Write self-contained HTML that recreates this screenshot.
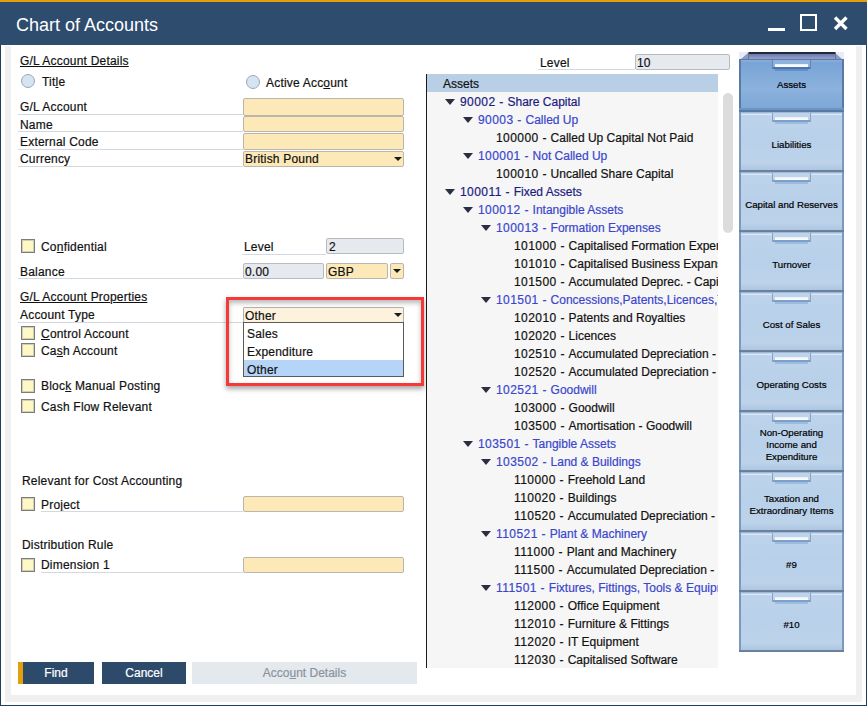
<!DOCTYPE html><html><head><meta charset="utf-8"><style>
*{margin:0;padding:0;box-sizing:border-box}
html,body{width:867px;height:706px;overflow:hidden;background:#fff;font-family:"Liberation Sans",sans-serif;-webkit-text-stroke:0.2px}
.a{position:absolute}
.t{position:absolute;font-size:12px;line-height:14px;color:#111;white-space:nowrap;letter-spacing:.2px}
.u{text-decoration:underline}
.ln{position:absolute;height:1px;background:#d3d9e0}
.fld{position:absolute;background:#fde9b8;border:1px solid #b9b6ad;border-radius:2px}
.fg{position:absolute;background:#e6eaee;border:1px solid #b8bcc1;border-radius:2px}
.cb{position:absolute;width:14px;height:14px;background:#fdf8c6;border:1px solid #7c7c7c;box-shadow:inset 0 0 0 1px rgba(130,130,130,.35)}
.rd{position:absolute;width:14px;height:14px;border-radius:50%;background:#d6e3f1;border:1px solid #9aa8b8}
.arr{position:absolute;width:0;height:0;border-left:4px solid transparent;border-right:4px solid transparent;border-top:4px solid #1a1a1a}
.tri{position:absolute;width:0;height:0;border-left:5px solid transparent;border-right:5px solid transparent;border-top:6px solid #2b2e42}
.tr{position:absolute;font-size:12px;line-height:14px;white-space:nowrap}
.np{letter-spacing:.43px}
.l1{color:#1c1c82}
.l2{color:#3a46cc}
.lf{color:#111}
.dr{position:absolute;left:739px;width:105px;height:60px}
.dt{position:absolute;width:105px;text-align:center;font-size:9.7px;line-height:12px;color:#000}
.btn{position:absolute;top:662px;height:22px;background:#2d4a6b;color:#fff;font-size:12px;line-height:22px;text-align:center}
</style></head><body>
<div class="a" style="left:0;top:0;width:867px;height:2px;background:#e4a00c"></div>
<div class="a" style="left:0;top:2px;width:867px;height:43px;background:#2e4c6d"></div>
<div class="a" style="left:16px;top:13.5px;font-size:18px;line-height:22px;color:#fff;white-space:nowrap;-webkit-text-stroke:0">Chart of Accounts</div>
<div class="a" style="left:768px;top:28px;width:17px;height:3px;background:#fff"></div>
<div class="a" style="left:800px;top:14px;width:17px;height:17px;border:2px solid #fff"></div>
<svg class="a" style="left:832px;top:14px" width="17" height="17" viewBox="0 0 17 17"><path d="M3 3.5 L14.5 15 M14.5 3.5 L3 15" stroke="#fff" stroke-width="3.4"/></svg>
<div class="a" style="left:0;top:45px;width:1px;height:661px;background:#1f3f5f"></div>
<div class="a" style="left:866px;top:45px;width:1px;height:661px;background:#1f3f5f"></div>
<div class="a" style="left:0;top:705px;width:867px;height:1px;background:#1f3f5f"></div>
<div class="a" style="left:5px;top:46px;width:6px;height:656px;background:#f0f0f0"></div>
<div class="a" style="left:856px;top:46px;width:6px;height:656px;background:#f0f0f0"></div>
<div class="a" style="left:5px;top:695px;width:857px;height:7px;background:#f0f0f0"></div>
<div class="t u" style="left:20px;top:54.0px;">G/L Account Details</div>
<div class="rd" style="left:21px;top:74px"></div>
<div class="t" style="left:42px;top:75.0px;">Tit<u>l</u>e</div>
<div class="rd" style="left:246px;top:75px"></div>
<div class="t" style="left:266px;top:75.5px;">Active Acc<u>o</u>unt</div>
<div class="t" style="left:20px;top:99.7px;">G/L Account</div>
<div class="ln" style="left:18px;top:114px;width:225px"></div>
<div class="fld" style="left:243px;top:98px;width:161px;height:18px"></div>
<div class="t" style="left:20px;top:117.5px;">Name</div>
<div class="ln" style="left:18px;top:131px;width:225px"></div>
<div class="fld" style="left:243px;top:116px;width:161px;height:16px"></div>
<div class="t" style="left:20px;top:134.5px;">External Code</div>
<div class="ln" style="left:18px;top:149px;width:225px"></div>
<div class="fld" style="left:243px;top:133px;width:161px;height:17px"></div>
<div class="t" style="left:20px;top:152.0px;">Currency</div>
<div class="ln" style="left:18px;top:166px;width:225px"></div>
<div class="fld" style="left:243px;top:151px;width:161px;height:16px"></div>
<div class="t" style="left:245px;top:152.0px;">British Pound</div>
<div class="arr" style="left:394px;top:157px"></div>
<div class="cb" style="left:21px;top:239px"></div>
<div class="t" style="left:41px;top:240.0px;">Co<u>n</u>fidential</div>
<div class="t" style="left:244px;top:240.0px;">Level</div>
<div class="ln" style="left:242px;top:254px;width:84px"></div>
<div class="fg" style="left:326px;top:238px;width:78px;height:16px"></div>
<div class="t" style="left:329px;top:240.0px;">2</div>
<div class="t" style="left:20px;top:265.0px;">Balance</div>
<div class="ln" style="left:18px;top:278px;width:225px"></div>
<div class="fg" style="left:243px;top:263px;width:81px;height:16px"></div>
<div class="t" style="left:245px;top:264.5px;">0.00</div>
<div class="fld" style="left:326px;top:263px;width:62px;height:16px"></div>
<div class="t" style="left:328px;top:264.5px;">GBP</div>
<div class="fld" style="left:390px;top:263px;width:14px;height:16px"></div>
<div class="arr" style="left:393px;top:269px"></div>
<div class="t u" style="left:20px;top:289.5px;">G/L Account Properties</div>
<div class="t" style="left:20px;top:307.5px;">Account Type</div>
<div class="ln" style="left:18px;top:322px;width:225px"></div>
<div class="cb" style="left:21px;top:326px"></div>
<div class="t" style="left:41px;top:327.0px;"><u>C</u>ontrol Account</div>
<div class="cb" style="left:21px;top:343px"></div>
<div class="t" style="left:41px;top:344.0px;">Ca<u>s</u>h Account</div>
<div class="cb" style="left:21px;top:378.5px"></div>
<div class="t" style="left:41px;top:379.0px;">Bloc<u>k</u> Manual Posting</div>
<div class="cb" style="left:21px;top:398.5px"></div>
<div class="t" style="left:41px;top:399.5px;">Cash Flow Relevant</div>
<div class="a" style="left:226px;top:297px;width:198px;height:89px;border:3px solid #f63838;box-shadow:0 3px 5px rgba(0,0,0,.35), inset 0 3px 5px rgba(0,0,0,.28)"></div>
<div class="a" style="left:243px;top:307px;width:161px;height:16px;background:#fdf3dc;border:1px solid #b0b0b0;border-radius:1px"></div>
<div class="t" style="left:245px;top:308.5px;">Other</div>
<div class="arr" style="left:394px;top:313px"></div>
<div class="a" style="left:243px;top:322px;width:161px;height:55px;background:#fff;border:1px solid #5a5a5a"></div>
<div class="a" style="left:244px;top:360px;width:159px;height:16px;background:#b5d4f8"></div>
<div class="t" style="left:247px;top:327.0px;">Sales</div>
<div class="t" style="left:247px;top:344.5px;">Expenditure</div>
<div class="t" style="left:247px;top:362.5px;">Other</div>
<div class="t" style="left:22px;top:474.0px;">Relevant for Cost Accounting</div>
<div class="cb" style="left:21px;top:497px"></div>
<div class="t" style="left:41px;top:497.5px;">Pro<u>j</u>ect</div>
<div class="ln" style="left:41px;top:511px;width:202px"></div>
<div class="fld" style="left:243px;top:496px;width:161px;height:16px"></div>
<div class="t" style="left:22px;top:538.0px;">Distribution Rule</div>
<div class="cb" style="left:21px;top:558px"></div>
<div class="t" style="left:41px;top:558.0px;">Dimension 1</div>
<div class="ln" style="left:41px;top:572px;width:202px"></div>
<div class="fld" style="left:243px;top:557px;width:161px;height:16px"></div>
<div class="btn" style="left:18px;width:76px">Find</div>
<div class="a" style="left:18px;top:662px;width:5px;height:22px;background:#e4a00c"></div>
<div class="btn" style="left:102px;width:84px">Cancel</div>
<div class="btn" style="left:192px;width:225px;background:#e4e9ee;color:#8b939b">Acco<u>u</u>nt Details</div>
<div class="t" style="left:540px;top:55.5px;">Level</div>
<div class="ln" style="left:538px;top:69px;width:97px"></div>
<div class="fg" style="left:635px;top:54px;width:95px;height:16px"></div>
<div class="t" style="left:637px;top:55.5px;">10</div>
<div class="a" style="left:426px;top:74px;width:1px;height:594px;background:#1a1a1a"></div>
<div class="a" style="left:427px;top:74px;width:291px;height:594px;background:#f6f6f6;overflow:hidden">
<div class="a" style="left:0;top:0;width:291px;height:18px;background:#b8cfe6"></div>
<div class="tr lf" style="left:16px;top:3px">Assets</div>
<div class="tri" style="left:18px;top:25px"></div>
<div class="tr l1" style="left:33px;top:20.7px"><span class="np">90002 - </span>Share Capital</div>
<div class="tri" style="left:36px;top:43px"></div>
<div class="tr l2" style="left:51px;top:38.7px"><span class="np">90003 - </span>Called Up</div>
<div class="tr lf" style="left:69px;top:56.7px"><span class="np">100000 - </span>Called Up Capital Not Paid</div>
<div class="tri" style="left:36px;top:79px"></div>
<div class="tr l2" style="left:51px;top:74.7px"><span class="np">100001 - </span>Not Called Up</div>
<div class="tr lf" style="left:69px;top:92.7px"><span class="np">100010 - </span>Uncalled Share Capital</div>
<div class="tri" style="left:18px;top:115px"></div>
<div class="tr l1" style="left:33px;top:110.7px"><span class="np">100011 - </span>Fixed Assets</div>
<div class="tri" style="left:36px;top:133px"></div>
<div class="tr l2" style="left:51px;top:128.7px"><span class="np">100012 - </span>Intangible Assets</div>
<div class="tri" style="left:54px;top:151px"></div>
<div class="tr l2" style="left:69px;top:146.7px"><span class="np">100013 - </span>Formation Expenses</div>
<div class="tr lf" style="left:87px;top:164.7px"><span class="np">101000 - </span>Capitalised Formation Expenses</div>
<div class="tr lf" style="left:87px;top:182.7px"><span class="np">101010 - </span>Capitalised Business Expansion</div>
<div class="tr lf" style="left:87px;top:200.7px"><span class="np">101500 - </span>Accumulated Deprec. - Capitalised</div>
<div class="tri" style="left:54px;top:223px"></div>
<div class="tr l2" style="left:69px;top:218.7px"><span class="np">101501 - </span>Concessions,Patents,Licences,Trade Marks</div>
<div class="tr lf" style="left:87px;top:236.7px"><span class="np">102010 - </span>Patents and Royalties</div>
<div class="tr lf" style="left:87px;top:254.7px"><span class="np">102020 - </span>Licences</div>
<div class="tr lf" style="left:87px;top:272.7px"><span class="np">102510 - </span>Accumulated Depreciation -</div>
<div class="tr lf" style="left:87px;top:290.7px"><span class="np">102520 - </span>Accumulated Depreciation -</div>
<div class="tri" style="left:54px;top:313px"></div>
<div class="tr l2" style="left:69px;top:308.7px"><span class="np">102521 - </span>Goodwill</div>
<div class="tr lf" style="left:87px;top:326.7px"><span class="np">103000 - </span>Goodwill</div>
<div class="tr lf" style="left:87px;top:344.7px"><span class="np">103500 - </span>Amortisation - Goodwill</div>
<div class="tri" style="left:36px;top:367px"></div>
<div class="tr l2" style="left:51px;top:362.7px"><span class="np">103501 - </span>Tangible Assets</div>
<div class="tri" style="left:54px;top:385px"></div>
<div class="tr l2" style="left:69px;top:380.7px"><span class="np">103502 - </span>Land & Buildings</div>
<div class="tr lf" style="left:87px;top:398.7px"><span class="np">110000 - </span>Freehold Land</div>
<div class="tr lf" style="left:87px;top:416.7px"><span class="np">110020 - </span>Buildings</div>
<div class="tr lf" style="left:87px;top:434.7px"><span class="np">110520 - </span>Accumulated Depreciation -</div>
<div class="tri" style="left:54px;top:457px"></div>
<div class="tr l2" style="left:69px;top:452.7px"><span class="np">110521 - </span>Plant & Machinery</div>
<div class="tr lf" style="left:87px;top:470.7px"><span class="np">111000 - </span>Plant and Machinery</div>
<div class="tr lf" style="left:87px;top:488.7px"><span class="np">111500 - </span>Accumulated Depreciation -</div>
<div class="tri" style="left:54px;top:511px"></div>
<div class="tr l2" style="left:69px;top:506.7px"><span class="np">111501 - </span>Fixtures, Fittings, Tools & Equipment</div>
<div class="tr lf" style="left:87px;top:524.7px"><span class="np">112000 - </span>Office Equipment</div>
<div class="tr lf" style="left:87px;top:542.7px"><span class="np">112010 - </span>Furniture & Fittings</div>
<div class="tr lf" style="left:87px;top:560.7px"><span class="np">112020 - </span>IT Equipment</div>
<div class="tr lf" style="left:87px;top:578.7px"><span class="np">112030 - </span>Capitalised Software</div>
</div>
<div class="a" style="left:723px;top:93px;width:10px;height:140px;border-radius:5px;background:#dcdcdc"></div>
<div class="a" style="left:739px;top:52px;width:105px;height:7px;background:#e6edf5"></div>
<svg class="a" style="left:739px;top:52px" width="105" height="7"><polygon points="2,7 10,0 95,0 103,7" fill="#8f97c3"/></svg>
<div class="a" style="left:749px;top:52px;width:86px;height:7px;background:linear-gradient(#1f2b3d 0,#1f2b3d 1.5px,#6a78b0 2px,#9aa1c8)"></div>
<div class="a" style="left:748px;top:52px;width:1px;height:7px;background:#6b7288"></div>
<div class="a" style="left:835px;top:52px;width:1px;height:7px;background:#6b7288"></div>
<div class="a" style="left:739px;top:59px;width:105px;height:53px;background:linear-gradient(#8ab0dc 0,#78a4d6 3px,#8cb2dd 55%,#7aa5d5 100%);border-left:2px solid #5a7aa5;border-right:2px solid #5a7aa5;border-top:1px solid #5a7aa5"></div>
<div class="a" style="left:739px;top:108px;width:105px;height:4px;background:linear-gradient(#6a94c8,#6a94c8 2px,#587aa2 2px)"></div>
<div class="a" style="left:772px;top:60px;width:39px;height:9px;background:#8fb3dd;border-left:1px solid #6585ad;border-right:1px solid #6585ad"></div>
<div class="a" style="left:775px;top:64px;width:33px;height:3px;background:linear-gradient(#e6eff9,#fff)"></div>
<div class="a" style="left:773px;top:67px;width:37px;height:2px;background:rgba(50,95,160,.75)"></div>
<div class="a" style="left:775px;top:69px;width:33px;height:2px;background:rgba(50,95,160,.75);opacity:.45"></div>
<div class="dt" style="left:739px;top:78.5px">Assets</div>
<div class="a" style="left:739px;top:112px;width:105px;height:60px;background:linear-gradient(#9cb9dc 0,#9cb9dc 1px,#b9d1ea 1px,#b9d1ea 2px,#dfeaf6 2px,#dfeaf6 3px,#bcd3eb 3px,#b8d0e9 50%,#bcd3ea 85%,#a9c2de 100%);border-left:2px solid #7d98bd;border-right:2px solid #7d98bd"></div>
<div class="a" style="left:739px;top:170px;width:105px;height:2px;background:linear-gradient(#6e839e,#687c96)"></div>
<div class="a" style="left:772px;top:113px;width:39px;height:9px;background:#bfd4ea;border-left:1px solid #8ea2ba;border-right:1px solid #8ea2ba"></div>
<div class="a" style="left:775px;top:117px;width:33px;height:3px;background:linear-gradient(#e6eff9,#fff)"></div>
<div class="a" style="left:773px;top:120px;width:37px;height:2px;background:rgba(80,125,185,.6)"></div>
<div class="a" style="left:775px;top:122px;width:33px;height:2px;background:rgba(80,125,185,.6);opacity:.45"></div>
<div class="dt" style="left:739px;top:138.5px">Liabilities</div>
<div class="a" style="left:739px;top:172px;width:105px;height:60px;background:linear-gradient(#9cb9dc 0,#9cb9dc 1px,#b9d1ea 1px,#b9d1ea 2px,#dfeaf6 2px,#dfeaf6 3px,#bcd3eb 3px,#b8d0e9 50%,#bcd3ea 85%,#a9c2de 100%);border-left:2px solid #7d98bd;border-right:2px solid #7d98bd"></div>
<div class="a" style="left:739px;top:230px;width:105px;height:2px;background:linear-gradient(#6e839e,#687c96)"></div>
<div class="a" style="left:772px;top:173px;width:39px;height:9px;background:#bfd4ea;border-left:1px solid #8ea2ba;border-right:1px solid #8ea2ba"></div>
<div class="a" style="left:775px;top:177px;width:33px;height:3px;background:linear-gradient(#e6eff9,#fff)"></div>
<div class="a" style="left:773px;top:180px;width:37px;height:2px;background:rgba(80,125,185,.6)"></div>
<div class="a" style="left:775px;top:182px;width:33px;height:2px;background:rgba(80,125,185,.6);opacity:.45"></div>
<div class="dt" style="left:739px;top:198.5px">Capital and Reserves</div>
<div class="a" style="left:739px;top:232px;width:105px;height:60px;background:linear-gradient(#9cb9dc 0,#9cb9dc 1px,#b9d1ea 1px,#b9d1ea 2px,#dfeaf6 2px,#dfeaf6 3px,#bcd3eb 3px,#b8d0e9 50%,#bcd3ea 85%,#a9c2de 100%);border-left:2px solid #7d98bd;border-right:2px solid #7d98bd"></div>
<div class="a" style="left:739px;top:290px;width:105px;height:2px;background:linear-gradient(#6e839e,#687c96)"></div>
<div class="a" style="left:772px;top:233px;width:39px;height:9px;background:#bfd4ea;border-left:1px solid #8ea2ba;border-right:1px solid #8ea2ba"></div>
<div class="a" style="left:775px;top:237px;width:33px;height:3px;background:linear-gradient(#e6eff9,#fff)"></div>
<div class="a" style="left:773px;top:240px;width:37px;height:2px;background:rgba(80,125,185,.6)"></div>
<div class="a" style="left:775px;top:242px;width:33px;height:2px;background:rgba(80,125,185,.6);opacity:.45"></div>
<div class="dt" style="left:739px;top:258.5px">Turnover</div>
<div class="a" style="left:739px;top:292px;width:105px;height:60px;background:linear-gradient(#9cb9dc 0,#9cb9dc 1px,#b9d1ea 1px,#b9d1ea 2px,#dfeaf6 2px,#dfeaf6 3px,#bcd3eb 3px,#b8d0e9 50%,#bcd3ea 85%,#a9c2de 100%);border-left:2px solid #7d98bd;border-right:2px solid #7d98bd"></div>
<div class="a" style="left:739px;top:350px;width:105px;height:2px;background:linear-gradient(#6e839e,#687c96)"></div>
<div class="a" style="left:772px;top:293px;width:39px;height:9px;background:#bfd4ea;border-left:1px solid #8ea2ba;border-right:1px solid #8ea2ba"></div>
<div class="a" style="left:775px;top:297px;width:33px;height:3px;background:linear-gradient(#e6eff9,#fff)"></div>
<div class="a" style="left:773px;top:300px;width:37px;height:2px;background:rgba(80,125,185,.6)"></div>
<div class="a" style="left:775px;top:302px;width:33px;height:2px;background:rgba(80,125,185,.6);opacity:.45"></div>
<div class="dt" style="left:739px;top:318.5px">Cost of Sales</div>
<div class="a" style="left:739px;top:352px;width:105px;height:60px;background:linear-gradient(#9cb9dc 0,#9cb9dc 1px,#b9d1ea 1px,#b9d1ea 2px,#dfeaf6 2px,#dfeaf6 3px,#bcd3eb 3px,#b8d0e9 50%,#bcd3ea 85%,#a9c2de 100%);border-left:2px solid #7d98bd;border-right:2px solid #7d98bd"></div>
<div class="a" style="left:739px;top:410px;width:105px;height:2px;background:linear-gradient(#6e839e,#687c96)"></div>
<div class="a" style="left:772px;top:353px;width:39px;height:9px;background:#bfd4ea;border-left:1px solid #8ea2ba;border-right:1px solid #8ea2ba"></div>
<div class="a" style="left:775px;top:357px;width:33px;height:3px;background:linear-gradient(#e6eff9,#fff)"></div>
<div class="a" style="left:773px;top:360px;width:37px;height:2px;background:rgba(80,125,185,.6)"></div>
<div class="a" style="left:775px;top:362px;width:33px;height:2px;background:rgba(80,125,185,.6);opacity:.45"></div>
<div class="dt" style="left:739px;top:378.5px">Operating Costs</div>
<div class="a" style="left:739px;top:412px;width:105px;height:60px;background:linear-gradient(#9cb9dc 0,#9cb9dc 1px,#b9d1ea 1px,#b9d1ea 2px,#dfeaf6 2px,#dfeaf6 3px,#bcd3eb 3px,#b8d0e9 50%,#bcd3ea 85%,#a9c2de 100%);border-left:2px solid #7d98bd;border-right:2px solid #7d98bd"></div>
<div class="a" style="left:739px;top:470px;width:105px;height:2px;background:linear-gradient(#6e839e,#687c96)"></div>
<div class="a" style="left:772px;top:413px;width:39px;height:9px;background:#bfd4ea;border-left:1px solid #8ea2ba;border-right:1px solid #8ea2ba"></div>
<div class="a" style="left:775px;top:417px;width:33px;height:3px;background:linear-gradient(#e6eff9,#fff)"></div>
<div class="a" style="left:773px;top:420px;width:37px;height:2px;background:rgba(80,125,185,.6)"></div>
<div class="a" style="left:775px;top:422px;width:33px;height:2px;background:rgba(80,125,185,.6);opacity:.45"></div>
<div class="dt" style="left:739px;top:426.5px">Non-Operating<br>Income and<br>Expenditure</div>
<div class="a" style="left:739px;top:472px;width:105px;height:60px;background:linear-gradient(#9cb9dc 0,#9cb9dc 1px,#b9d1ea 1px,#b9d1ea 2px,#dfeaf6 2px,#dfeaf6 3px,#bcd3eb 3px,#b8d0e9 50%,#bcd3ea 85%,#a9c2de 100%);border-left:2px solid #7d98bd;border-right:2px solid #7d98bd"></div>
<div class="a" style="left:739px;top:530px;width:105px;height:2px;background:linear-gradient(#6e839e,#687c96)"></div>
<div class="a" style="left:772px;top:473px;width:39px;height:9px;background:#bfd4ea;border-left:1px solid #8ea2ba;border-right:1px solid #8ea2ba"></div>
<div class="a" style="left:775px;top:477px;width:33px;height:3px;background:linear-gradient(#e6eff9,#fff)"></div>
<div class="a" style="left:773px;top:480px;width:37px;height:2px;background:rgba(80,125,185,.6)"></div>
<div class="a" style="left:775px;top:482px;width:33px;height:2px;background:rgba(80,125,185,.6);opacity:.45"></div>
<div class="dt" style="left:739px;top:492.5px">Taxation and<br>Extraordinary Items</div>
<div class="a" style="left:739px;top:532px;width:105px;height:60px;background:linear-gradient(#9cb9dc 0,#9cb9dc 1px,#b9d1ea 1px,#b9d1ea 2px,#dfeaf6 2px,#dfeaf6 3px,#bcd3eb 3px,#b8d0e9 50%,#bcd3ea 85%,#a9c2de 100%);border-left:2px solid #7d98bd;border-right:2px solid #7d98bd"></div>
<div class="a" style="left:739px;top:590px;width:105px;height:2px;background:linear-gradient(#6e839e,#687c96)"></div>
<div class="a" style="left:772px;top:533px;width:39px;height:9px;background:#bfd4ea;border-left:1px solid #8ea2ba;border-right:1px solid #8ea2ba"></div>
<div class="a" style="left:775px;top:537px;width:33px;height:3px;background:linear-gradient(#e6eff9,#fff)"></div>
<div class="a" style="left:773px;top:540px;width:37px;height:2px;background:rgba(80,125,185,.6)"></div>
<div class="a" style="left:775px;top:542px;width:33px;height:2px;background:rgba(80,125,185,.6);opacity:.45"></div>
<div class="dt" style="left:739px;top:558.5px">#9</div>
<div class="a" style="left:739px;top:592px;width:105px;height:60px;background:linear-gradient(#9cb9dc 0,#9cb9dc 1px,#b9d1ea 1px,#b9d1ea 2px,#dfeaf6 2px,#dfeaf6 3px,#bcd3eb 3px,#b8d0e9 50%,#bcd3ea 85%,#a9c2de 100%);border-left:2px solid #7d98bd;border-right:2px solid #7d98bd"></div>
<div class="a" style="left:739px;top:650px;width:105px;height:2px;background:linear-gradient(#6e839e,#687c96)"></div>
<div class="a" style="left:772px;top:593px;width:39px;height:9px;background:#bfd4ea;border-left:1px solid #8ea2ba;border-right:1px solid #8ea2ba"></div>
<div class="a" style="left:775px;top:597px;width:33px;height:3px;background:linear-gradient(#e6eff9,#fff)"></div>
<div class="a" style="left:773px;top:600px;width:37px;height:2px;background:rgba(80,125,185,.6)"></div>
<div class="a" style="left:775px;top:602px;width:33px;height:2px;background:rgba(80,125,185,.6);opacity:.45"></div>
<div class="dt" style="left:739px;top:618.5px">#10</div>
</body></html>
